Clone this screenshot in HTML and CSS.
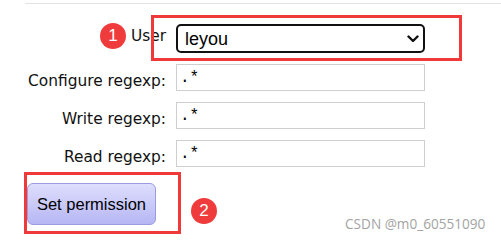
FILE: index.html
```html
<!DOCTYPE html>
<html lang="en">
<head>
    <meta charset="UTF-8">
    <title>Permissions</title>
    <link rel="stylesheet" href="styles.css">
</head>
<body>
    <div class="page">
        <div class="rule"></div>

        <form class="perm-form">
            <label class="user-label" for="user">User</label>
            <div class="select-wrap">
                <select id="user">
                    <option>leyou</option>
                </select>
                <svg class="chevron" width="12" height="8" viewBox="0 0 12 8">
                    <path d="M1.5 1.5 L6 6 L10.5 1.5" fill="none" stroke="#111" stroke-width="2.4" stroke-linecap="round" stroke-linejoin="round"/>
                </svg>
            </div>

            <label for="configure">Configure regexp:</label>
            <input type="text" id="configure" value=".*">

            <label for="write">Write regexp:</label>
            <input type="text" id="write" value=".*">

            <label for="read">Read regexp:</label>
            <input type="text" id="read" value=".*">
        </form>

        <div class="actions">
            <button type="button">Set permission</button>
        </div>

        <!-- annotations -->
        <div class="mark mark-user"></div>
        <div class="mark mark-button"></div>
        <span class="badge badge-1">1</span>
        <span class="badge badge-2">2</span>
        <span class="watermark">CSDN @m0_60551090</span>
    </div>
</body>
</html>
```

FILE: styles.css
```css
body {
    margin: 0;
    font-family: "DejaVu Sans", Verdana, sans-serif;
    background: #fff;
    color: #111;
}
.page {
    position: relative;
    width: 501px;
    height: 240px;
    overflow: hidden;
}
.rule {
    margin: 3px 0 0 25px;
    border-top: 1px solid #e3e3e3;
}
.perm-form {
    display: grid;
    grid-template-columns: 141px 249px;
    column-gap: 10px;
    row-gap: 11px;
    align-items: end;
    margin: 20px 0 0 25px;
}
.perm-form label {
    font-size: 15.4px;
    text-align: right;
    line-height: 18px;
    padding-bottom: 1px;
}
.perm-form .user-label {
    align-self: start;
    padding-top: 3px;
}
.select-wrap {
    position: relative;
}
select {
    display: block;
    width: 249px;
    height: 29px;
    box-sizing: border-box;
    border: 2px solid #111;
    border-radius: 5px;
    padding: 0 0 0 7px;
    font-family: "Liberation Sans", Arial, sans-serif;
    font-size: 18px;
    color: #000;
    background: #fff;
    appearance: none;
}
.chevron {
    position: absolute;
    right: 6px;
    top: 11px;
}
input[type="text"] {
    display: block;
    width: 249px;
    height: 27px;
    box-sizing: border-box;
    border: 1px solid #cfcfcf;
    padding: 0 0 0 3px;
    font-family: "Liberation Mono", monospace;
    font-size: 16px;
    color: #000;
}
.actions {
    margin: 16px 0 0 27px;
}
button {
    width: 129px;
    height: 42px;
    box-sizing: border-box;
    border: 1px solid #9b9be2;
    border-radius: 6px;
    background: linear-gradient(#dedefd, #b6b6f5);
    font-family: "Liberation Sans", Arial, sans-serif;
    font-size: 16.5px;
    color: #000;
    padding: 0;
}
.mark {
    position: absolute;
    border: 3px solid #f03a3a;
    box-sizing: border-box;
}
.mark-user {
    left: 151px;
    top: 15px;
    width: 311px;
    height: 46px;
}
.mark-button {
    left: 24px;
    top: 172px;
    width: 157px;
    height: 62px;
}
.badge {
    position: absolute;
    width: 26px;
    height: 26px;
    border-radius: 50%;
    background: #ef3b3b;
    color: #fff;
    font-family: "Liberation Sans", Arial, sans-serif;
    font-size: 17px;
    line-height: 26px;
    text-align: center;
}
.badge-1 {
    left: 100px;
    top: 23px;
}
.badge-2 {
    left: 191px;
    top: 198px;
}
.watermark {
    position: absolute;
    left: 345px;
    top: 214px;
    font-family: "Open Sans", sans-serif;
    font-size: 13.6px;
    color: #a3a3a3;
}
```
